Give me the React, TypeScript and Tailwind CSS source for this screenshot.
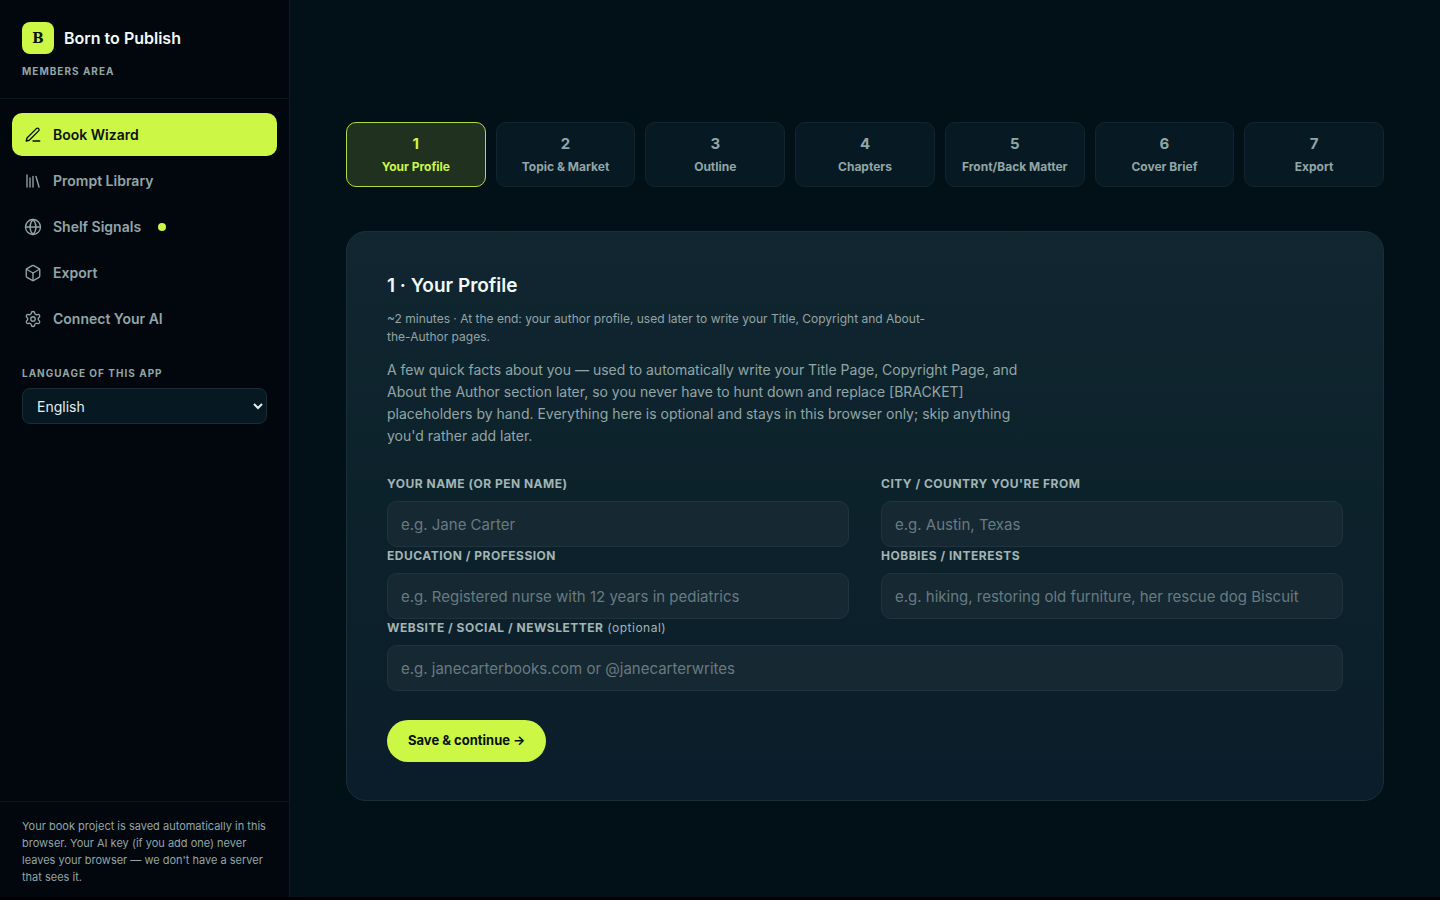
import React from 'react';
import { Box, Globe, Library, Settings } from 'lucide-react';
import { FiEdit3 } from 'react-icons/fi';

interface NavItem {
  label: string;
  icon: React.ElementType;
  dot?: boolean;
}

const navItems: NavItem[] = [
  { label: 'Book Wizard', icon: FiEdit3 },
  { label: 'Prompt Library', icon: Library },
  { label: 'Shelf Signals', icon: Globe, dot: true },
  { label: 'Export', icon: Box },
  { label: 'Connect Your AI', icon: Settings },
];

const steps = ['Your Profile', 'Topic & Market', 'Outline', 'Chapters', 'Front/Back Matter', 'Cover Brief', 'Export'];

const fields = [
  { id: 'name', label: 'YOUR NAME (OR PEN NAME)', placeholder: 'e.g. Jane Carter' },
  { id: 'city', label: "CITY / COUNTRY YOU'RE FROM", placeholder: 'e.g. Austin, Texas' },
  { id: 'education', label: 'EDUCATION / PROFESSION', placeholder: 'e.g. Registered nurse with 12 years in pediatrics' },
  { id: 'hobbies', label: 'HOBBIES / INTERESTS', placeholder: 'e.g. hiking, restoring old furniture, her rescue dog Biscuit' },
  { id: 'website', label: 'WEBSITE / SOCIAL / NEWSLETTER', placeholder: 'e.g. janecarterbooks.com or @janecarterwrites', optional: true, wide: true },
];

function Sidebar() {
  return (
    <aside className="flex w-[290px] shrink-0 flex-col border-r border-[#0c1b22] bg-[#01070d]">
      <div className="border-b border-[#0c161d] px-[22px] pt-[22px] pb-[19px]">
        <div className="flex items-center gap-[10px]">
          <div className="flex size-8 items-center justify-center rounded-lg bg-[#ccf845] font-['DejaVu_Serif_Condensed','DejaVu_Serif',serif] text-[15px] font-bold text-[#081209]">
            B
          </div>
          <span className="text-base font-semibold text-[#f1faf9]">Born to Publish</span>
        </div>
        <p className="mt-[9px] text-[10px] leading-4 font-bold tracking-[1px] text-[#93a5a6]">MEMBERS AREA</p>
      </div>

      <nav className="flex flex-col gap-[3px] px-3 pt-[14px]">
        {navItems.map(({ label, icon: Icon, dot }, i) => (
          <a
            key={label}
            href="#"
            className={`flex h-[43px] items-center gap-[11px] rounded-[10px] px-3 text-[14px] font-semibold ${
              i === 0 ? 'bg-[#ccf845] text-[#081209]' : 'text-[#93a5a6]'
            }`}
          >
            <Icon className="size-[18px] shrink-0" strokeWidth={1.8} />
            {label}
            {dot && <span className="ml-[6px] size-2 rounded-full bg-[#ccf845]" />}
          </a>
        ))}
      </nav>

      <div className="px-[22px] pt-[25px]">
        <label htmlFor="language" className="block text-[10px] leading-4 font-bold tracking-[1px] text-[#93a5a6]">
          LANGUAGE OF THIS APP
        </label>
        <select
          id="language"
          className="mt-[7px] h-9 w-full rounded-lg border border-[#1a2d36] bg-[#061923] pl-[10px] text-[14px] text-[#e4eeee]"
        >
          <option>English</option>
        </select>
      </div>

      <p className="mt-auto border-t border-[#0c161d] px-[22px] pt-4 pb-[11px] text-[11px] leading-[17px] text-[#93a5a6]">
        Your book project is saved automatically in this browser. Your AI key (if you add one) never leaves your
        browser — we don't have a server that sees it.
      </p>
    </aside>
  );
}

function Steps() {
  return (
    <div className="grid grid-cols-7 gap-[10px]">
      {steps.map((step, i) => (
        <button
          key={step}
          className={`flex h-[65px] flex-col items-center justify-center rounded-[10px] border font-bold ${
            i === 0 ? 'border-[#b3da42] bg-[#213120] text-[#ccf845]' : 'border-[#12252d] bg-[#071a23] text-[#93a5a6]'
          }`}
        >
          <span className="text-[15px] leading-6">{i + 1}</span>
          <span className="text-[12px] leading-[22px] whitespace-nowrap">{step}</span>
        </button>
      ))}
    </div>
  );
}

export default function App() {
  return (
    <div className="bg-black pb-1 font-['Inter',sans-serif] antialiased">
      <div className="flex min-h-[calc(100vh-4px)] bg-[#021118]">
        <Sidebar />

        <main className="min-w-0 flex-1 px-14 pt-[122px] pb-24">
          <Steps />

          <section className="mt-11 rounded-[20px] border border-[#1a2f37] bg-linear-to-b from-[#112630] via-[#0c222b] to-[#0b1d2a] px-10 pt-10 pb-[38px]">
            <h1 className="text-[19px] leading-7 font-semibold text-[#f1faf9]">1 · Your Profile</h1>
            <p className="mt-[10px] max-w-[550px] text-[12px] leading-[18px] text-[#93a5a6]">
              ~2 minutes · At the end: your author profile, used later to write your Title, Copyright and
              About-the-Author pages.
            </p>
            <p className="mt-[13px] max-w-[640px] text-[14px] leading-[22px] text-[#93a5a6]">
              A few quick facts about you — used to automatically write your Title Page, Copyright Page, and About the
              Author section later, so you never have to hunt down and replace [BRACKET] placeholders by hand.
              Everything here is optional and stays in this browser only; skip anything you'd rather add later.
            </p>

            <form className="mt-7" onSubmit={(e) => e.preventDefault()}>
              <div className="grid grid-cols-2 gap-x-8">
                {fields.map((field) => (
                  <div key={field.id} className={field.wide ? 'col-span-2' : ''}>
                    <label htmlFor={field.id} className="block text-[12px] leading-[18px] font-bold tracking-[0.5px] text-[#a3b4b4]">
                      {field.label}
                      {field.optional && <span className="font-normal"> (optional)</span>}
                    </label>
                    <input
                      id={field.id}
                      type="text"
                      placeholder={field.placeholder}
                      className="mt-2 block h-[46px] w-full rounded-[10px] border border-[#20343d] bg-[#162832] px-[13px] text-[15px] text-[#e4eeee] placeholder:text-[#687b80]"
                    />
                  </div>
                ))}
              </div>
              <button
                type="submit"
                className="mt-[29px] h-[42px] rounded-full bg-[#ccf845] px-[21px] text-[13px] font-bold text-[#081209]"
              >
                Save &amp; continue →
              </button>
            </form>
          </section>
        </main>
      </div>
    </div>
  );
}
